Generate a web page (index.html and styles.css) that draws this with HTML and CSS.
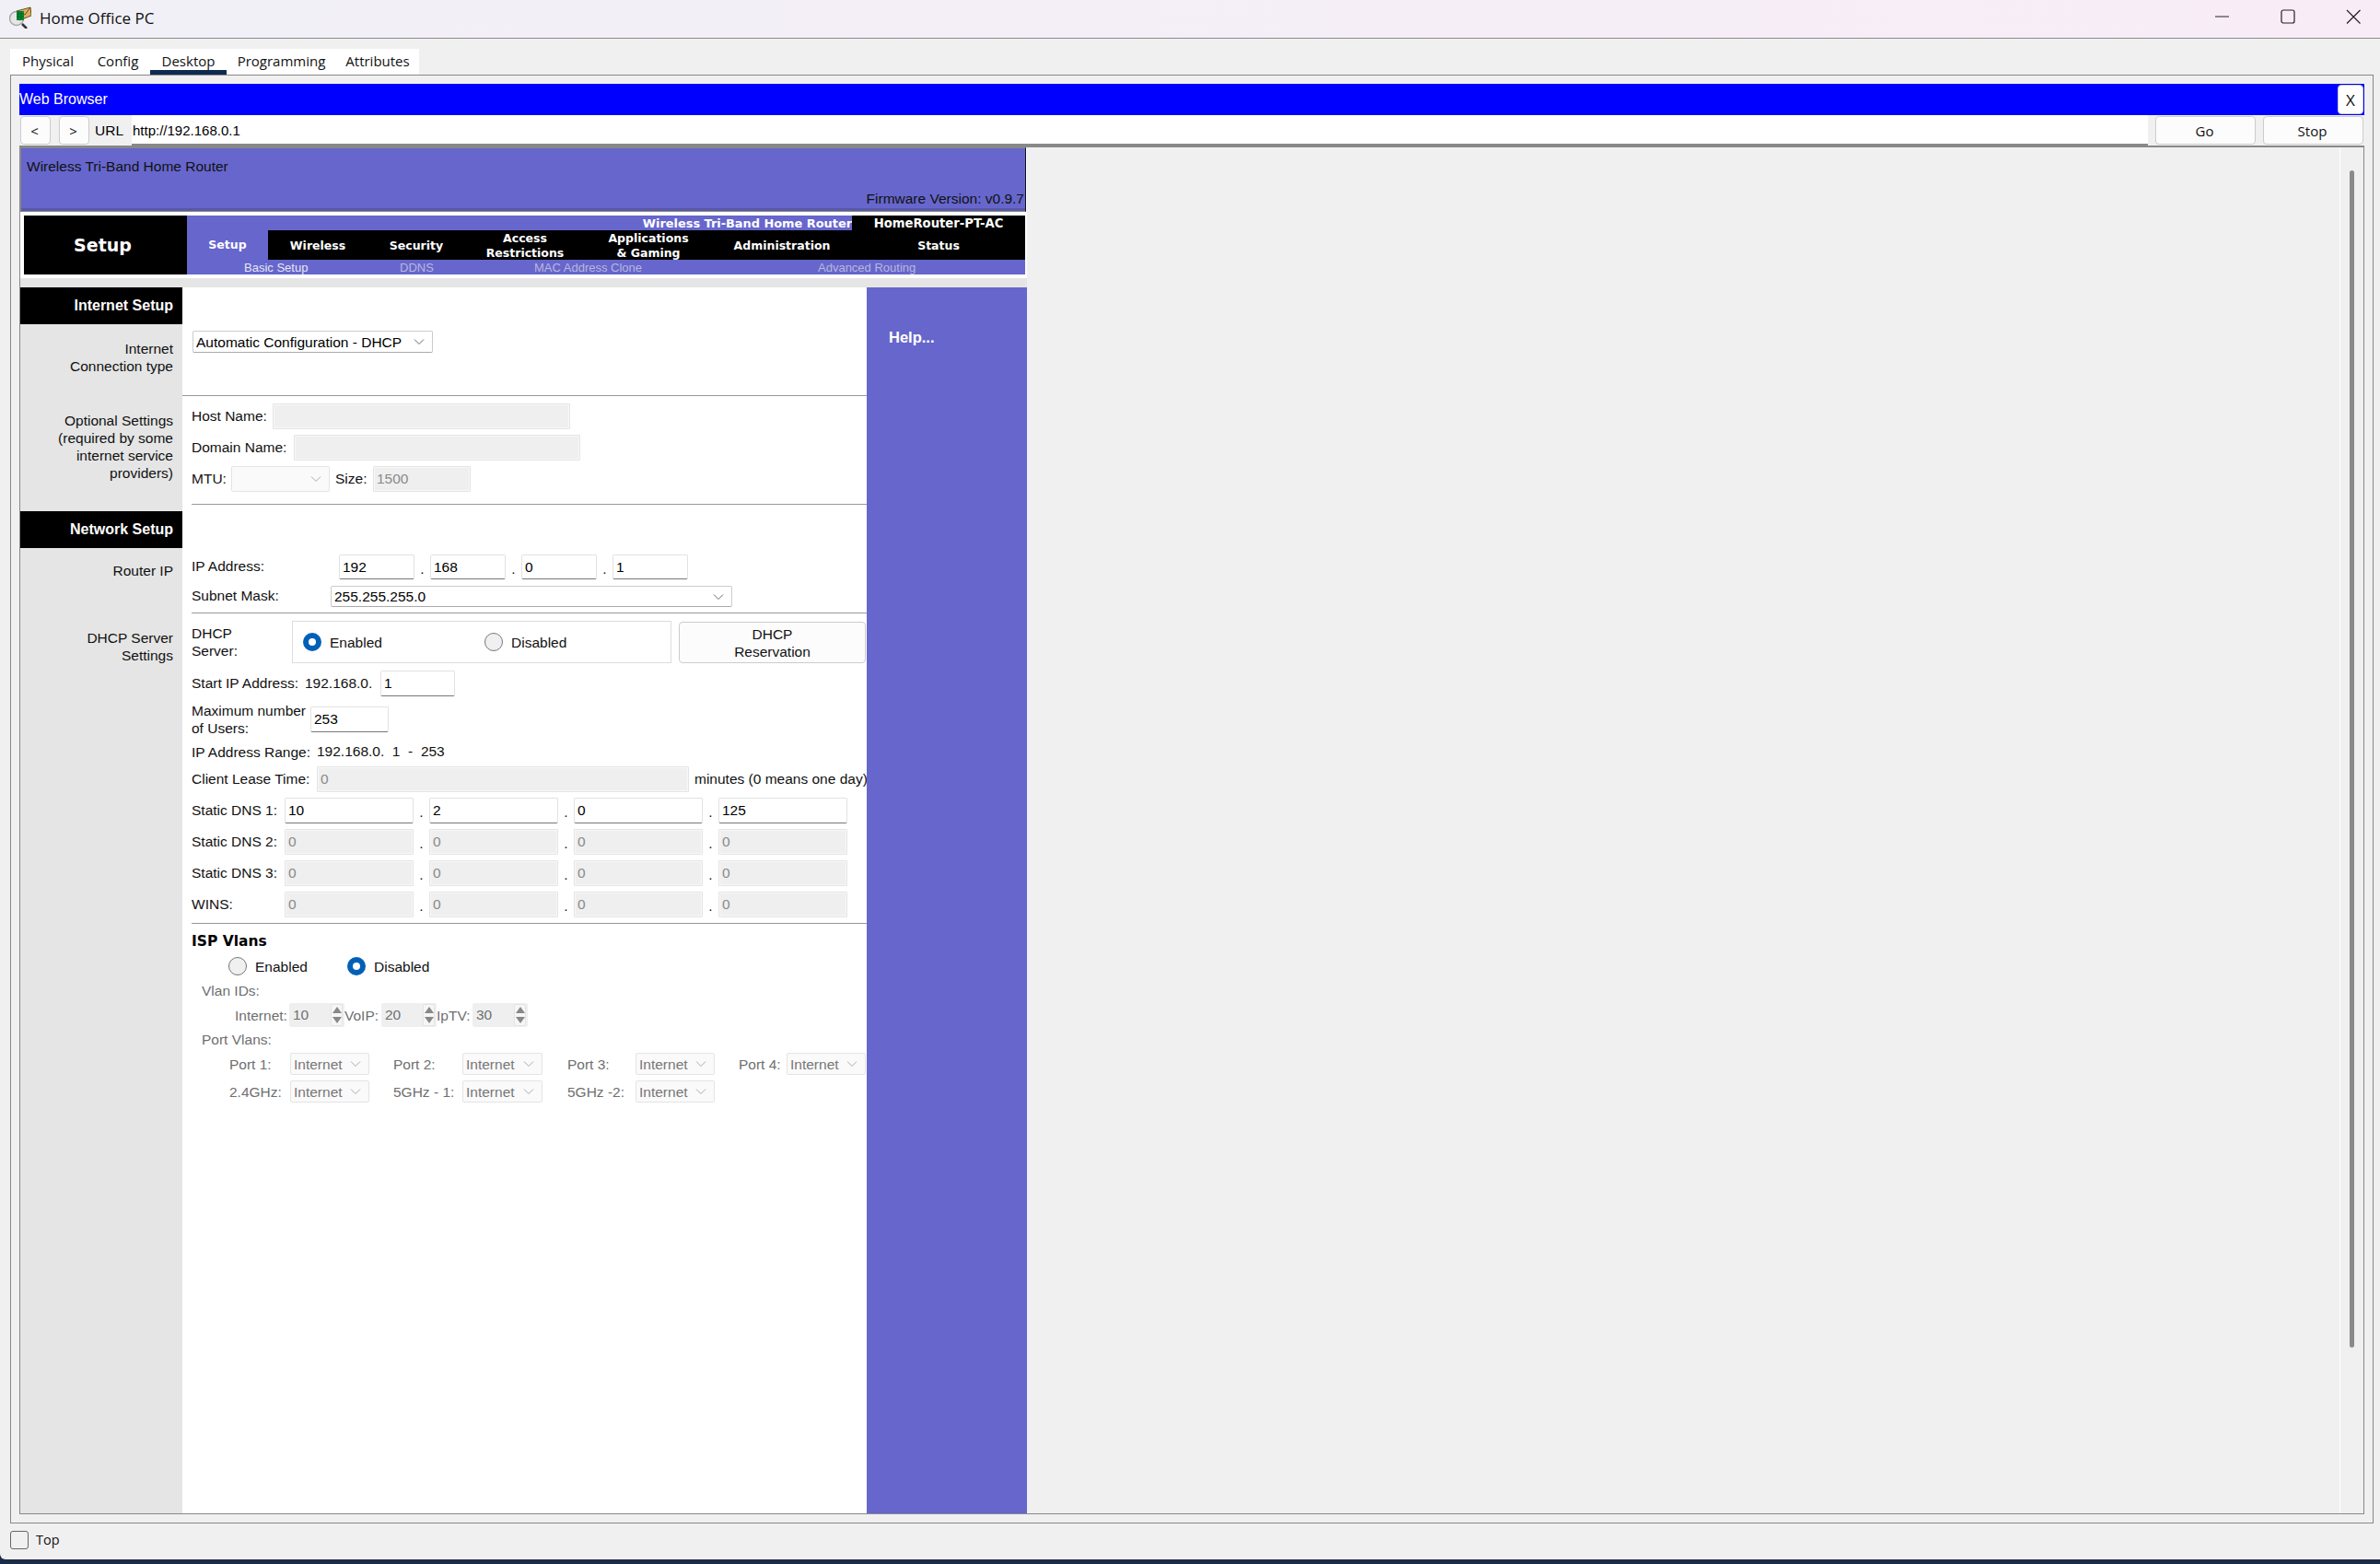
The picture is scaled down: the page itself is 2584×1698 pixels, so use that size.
FILE: index.html
```html
<!DOCTYPE html>
<html>

	<head>
		<meta charset="utf-8" />
		<title>Home Office PC</title>
		<link rel="stylesheet" href="styles.css">
	</head>

	<body>
		<div class="window">
			<header class="titlebar">
				<svg class="app-icon" width="24" height="24" viewBox="0 0 24 24">
					<circle cx="8" cy="13" r="7.5" fill="#e6e6e6" stroke="#a8a8a8" stroke-width="1.5"/>
					<path d="M8 5 L23 1 L24 10 L11 15 Z" fill="#d8b060" stroke="#6a5020" stroke-width="1"/>
					<path d="M8 5 L17 9 L23 1" fill="none" stroke="#6a5020" stroke-width="1"/>
					<rect x="8" y="5" width="8" height="10" fill="#0c8a2c"/>
					<path d="M10 5V15M13 5V15M8 8H16M8 11H16" stroke="#063" stroke-width="1"/>
					<path d="M14 19 L19 24" stroke="#333" stroke-width="2.5"/>
				</svg>
				<span class="title">Home Office PC</span>
				<div class="controls">
					<svg width="16" height="16" viewBox="0 0 16 16"><path d="M0 8H15" stroke="#222" stroke-width="1"/></svg>
					<svg width="16" height="16" viewBox="0 0 16 16"><rect x="1" y="1" width="14" height="14" rx="2" fill="none" stroke="#222" stroke-width="1.2"/></svg>
					<svg width="16" height="16" viewBox="0 0 16 16"><path d="M1 1L15.5 15.5M15.5 1L1 15.5" stroke="#222" stroke-width="1.2"/></svg>
				</div>
			</header>

			<ul class="tabs">
				<li class="tab tab-physical">Physical</li>
				<li class="tab tab-config">Config</li>
				<li class="tab tab-desktop">Desktop</li>
				<li class="tab tab-programming">Programming</li>
				<li class="tab tab-attributes">Attributes</li>
			</ul>

			<div class="frame">
				<div class="bluebar">
					<span>Web Browser</span>
					<button class="btn btn-x">X</button>
				</div>
				<div class="urlrow">
					<button class="btn btn-nav">&lt;</button>
					<button class="btn btn-nav">&gt;</button>
					<span class="url-label">URL</span>
					<input class="url-input" type="text" value="http://192.168.0.1">
					<button class="btn btn-go">Go</button>
					<button class="btn btn-go">Stop</button>
				</div>

				<div class="inner">
					<div class="view">
						<div class="site">
							<div class="site-head">
								<div>Wireless Tri-Band Home Router</div>
								<div class="firmware">Firmware Version: v0.9.7</div>
							</div>

							<div class="menu">
								<div class="brand">Setup</div>
								<div class="menu-body">
									<div class="menu-top">
										<div class="product">Wireless Tri-Band Home Router</div>
										<div class="model">HomeRouter-PT-AC</div>
									</div>
									<div class="menu-nav">
										<div class="nav nav-setup">Setup</div>
										<div class="nav nav-wireless">Wireless</div>
										<div class="nav nav-security">Security</div>
										<div class="nav nav-access">Access<br>Restrictions</div>
										<div class="nav nav-apps">Applications<br>&amp; Gaming</div>
										<div class="nav nav-admin">Administration</div>
										<div class="nav nav-status">Status</div>
									</div>
									<div class="menu-sub">
										<span class="sub sub-basic">Basic Setup</span>
										<span class="sub sub-ddns">DDNS</span>
										<span class="sub sub-mac">MAC Address Clone</span>
										<span class="sub">Advanced Routing</span>
									</div>
								</div>
							</div>
							<div class="strip"></div>

							<div class="main">
								<div class="side">
									<div class="side-head">Internet Setup</div>
									<div class="side-text side-conn">Internet<br>Connection type</div>
									<div class="side-text side-opt">Optional Settings<br>(required by some<br>internet service<br>providers)</div>
									<div class="side-head side-net">Network Setup</div>
									<div class="side-text side-router">Router IP</div>
									<div class="side-text side-dhcp">DHCP Server<br>Settings</div>
								</div>

								<div class="form">
									<div class="conn-block">
										<select class="sel sel-conn"><option>Automatic Configuration - DHCP</option></select>
									</div>

									<div class="row row-host">
										<label class="w88 up">Host Name:</label>
										<input class="off w323" disabled>
									</div>
									<div class="row row-domain">
										<label class="w111 up">Domain Name:</label>
										<input class="off w311" disabled>
									</div>
									<div class="row row-mtu">
										<label class="w43 up">MTU:</label>
										<select class="sel sel-off w107" disabled></select>
										<label class="size-label up">Size:</label>
										<input class="off w106" value="1500" disabled>
									</div>
									<hr class="rule rule-1">

									<div class="row row-ip">
										<label class="w160 up">IP Address:</label>
										<input class="on w82" value="192"><span class="dot">.</span>
										<input class="on w82" value="168"><span class="dot">.</span>
										<input class="on w82" value="0"><span class="dot">.</span>
										<input class="on w82" value="1">
									</div>
									<div class="row row-mask">
										<label class="w151 up">Subnet Mask:</label>
										<select class="sel w436"><option>255.255.255.0</option></select>
									</div>
									<hr class="rule rule-2">

									<div class="row row-server">
										<label class="w109">DHCP<br>Server:</label>
										<div class="radio-box">
											<label class="choice"><input type="radio" name="dhcp" checked>Enabled</label>
											<label class="choice"><input type="radio" name="dhcp">Disabled</label>
										</div>
										<button class="btn btn-res">DHCP<br>Reservation</button>
									</div>
									<div class="row row-start">
										<label class="w123 up">Start IP Address:</label>
										<span class="w82">192.168.0.</span>
										<input class="on w81" value="1">
									</div>
									<div class="row row-max">
										<label class="w129">Maximum number<br>of Users:</label>
										<input class="on w85" value="253">
									</div>
									<div class="row row-range">
										<label class="w136">IP Address Range:</label>
										<span>192.168.0.&nbsp; 1&nbsp; -&nbsp; 253</span>
									</div>
									<div class="row row-lease">
										<label class="w136 up">Client Lease Time:</label>
										<input class="off w404" value="0" disabled>
										<span class="lease-note">minutes (0 means one day)</span>
									</div>

									<div class="row row-dns">
										<label class="w101 up">Static DNS 1:</label>
										<input class="on w140" value="10"><span class="dot">.</span>
										<input class="on w140" value="2"><span class="dot">.</span>
										<input class="on w140" value="0"><span class="dot">.</span>
										<input class="on w140" value="125">
									</div>
									<div class="row row-dns2">
										<label class="w101 up">Static DNS 2:</label>
										<input class="off w140" value="0" disabled><span class="dot">.</span>
										<input class="off w140" value="0" disabled><span class="dot">.</span>
										<input class="off w140" value="0" disabled><span class="dot">.</span>
										<input class="off w140" value="0" disabled>
									</div>
									<div class="row row-dns2">
										<label class="w101 up">Static DNS 3:</label>
										<input class="off w140" value="0" disabled><span class="dot">.</span>
										<input class="off w140" value="0" disabled><span class="dot">.</span>
										<input class="off w140" value="0" disabled><span class="dot">.</span>
										<input class="off w140" value="0" disabled>
									</div>
									<div class="row row-dns2">
										<label class="w101 up">WINS:</label>
										<input class="off w140" value="0" disabled><span class="dot">.</span>
										<input class="off w140" value="0" disabled><span class="dot">.</span>
										<input class="off w140" value="0" disabled><span class="dot">.</span>
										<input class="off w140" value="0" disabled>
									</div>
									<hr class="rule rule-3">

									<div class="isp-title">ISP Vlans</div>
									<div class="row row-isp">
										<label class="choice choice-isp"><input type="radio" name="isp">Enabled</label>
										<label class="choice"><input type="radio" name="isp" checked>Disabled</label>
									</div>
									<div class="row row-vlan muted">Vlan IDs:</div>
									<div class="row row-spin muted">
										<label class="w59">Internet:</label>
										<div class="spin"><span>10</span><i class="arrows"><b class="up-arrow"></b><b class="down-arrow"></b></i></div>
										<label class="w40">VoIP:</label>
										<div class="spin"><span>20</span><i class="arrows"><b class="up-arrow"></b><b class="down-arrow"></b></i></div>
										<label class="w39">IpTV:</label>
										<div class="spin"><span>30</span><i class="arrows"><b class="up-arrow"></b><b class="down-arrow"></b></i></div>
									</div>
									<div class="row row-portv muted">Port Vlans:</div>
									<div class="row row-port muted">
										<label class="w66">Port 1:</label>
										<select class="sel sel-off w86" disabled><option>Internet</option></select>
										<label class="w75 gap26">Port 2:</label>
										<select class="sel sel-off w87" disabled><option>Internet</option></select>
										<label class="w74 gap27">Port 3:</label>
										<select class="sel sel-off w86" disabled><option>Internet</option></select>
										<label class="w52 gap26">Port 4:</label>
										<select class="sel sel-off w86" disabled><option>Internet</option></select>
									</div>
									<div class="row row-port row-port2 muted">
										<label class="w66">2.4GHz:</label>
										<select class="sel sel-off w86" disabled><option>Internet</option></select>
										<label class="w75 gap26">5GHz - 1:</label>
										<select class="sel sel-off w87" disabled><option>Internet</option></select>
										<label class="w74 gap27">5GHz -2:</label>
										<select class="sel sel-off w86" disabled><option>Internet</option></select>
									</div>
								</div>

								<div class="help">Help...</div>
							</div>
						</div>
					</div>
					<div class="track"><div class="thumb"></div></div>
				</div>
			</div>

			<div class="foot">
				<span class="check"></span>
				<span>Top</span>
			</div>
		</div>
	</body>

</html>
```

FILE: styles.css
```css
* {
	box-sizing: border-box;
}

html, body {
	margin: 0;
	padding: 0;
}

body {
	width: 2584px;
	height: 1698px;
	overflow: hidden;
	background: #1b2b48;
	font-family: "Liberation Sans", Arial, sans-serif;
	font-size: 15.5px;
	color: #000;
}

.window {
	height: 1693px;
	background: #f0f0f0;
	border-bottom-left-radius: 6px;
	overflow: hidden;
}

/* title bar */
.titlebar {
	height: 42px;
	display: flex;
	align-items: center;
	padding-left: 10px;
	background: linear-gradient(90deg, #f1f0f7, #f8edf7);
	border-bottom: 1px solid #8a8a8a;
	font-family: "Open Sans", sans-serif;
}

.app-icon {
	flex: none;
	margin-top: -4px;
}

.title {
	margin: -3px 0 0 9px;
	font-size: 17px;
	color: #111;
}

.controls {
	margin-left: auto;
	margin-right: 21px;
	margin-top: -5px;
	display: flex;
	gap: 55px;
}

/* tabs */
.tabs {
	list-style: none;
	margin: 11px 0 0 11px;
	padding: 0;
	width: 444px;
	height: 28px;
	display: flex;
	background: #fff;
	font-family: "Open Sans", sans-serif;
	font-size: 15px;
}

.tab {
	text-align: center;
	line-height: 27px;
	color: #111;
}

.tab-physical { width: 82px; }
.tab-config { width: 70px; }
.tab-programming { width: 119px; }
.tab-attributes { width: 90px; }

.tab-desktop {
	width: 83px;
	border-bottom: 5px solid #0f2a50;
}

/* outer frame */
.frame {
	width: 2566px;
	height: 1573px;
	margin-left: 11px;
	padding: 9px;
	border: 1px solid #888;
}

.bluebar {
	height: 34px;
	display: flex;
	align-items: center;
	justify-content: space-between;
	background: #00f;
	color: #fff;
	font-size: 16px;
}

.btn {
	font-family: "Open Sans", sans-serif;
	font-size: 15px;
	color: #111;
	background: #fcfcfc;
	border: 1px solid #ccc;
	border-radius: 4px;
	padding: 0 2px 0 0;
}

.btn-x {
	width: 28px;
	height: 32px;
	margin-right: 1px;
	padding: 0;
	background: #fff;
	font-size: 17px;
}

.urlrow {
	height: 33px;
	display: flex;
	align-items: center;
}

.btn-nav {
	width: 33px;
	height: 31px;
	margin-left: 1px;
	margin-right: 8px;
}

.url-label {
	width: 40px;
	margin-left: -2px;
	font-size: 15.5px;
}

.url-input {
	width: 2189px;
	height: 33px;
	padding: 1px 0 0 1px;
	border: 0;
	border-bottom: 2px solid #888;
	outline: 0;
	font: 15px "Liberation Sans", Arial, sans-serif;
	background: #fff;
}

.btn-go {
	width: 109px;
	height: 31px;
	margin-left: 8px;
}

/* embedded page */
.inner {
	width: 2546px;
	height: 1486px;
	display: flex;
	border: 1px solid #888;
	border-top-width: 2px;
}

.view {
	width: 2518px;
	overflow: hidden;
}

.track {
	width: 26px;
	border-left: 1px solid #fff;
}

.thumb {
	width: 5px;
	height: 1278px;
	margin: 25px 0 0 10px;
	border-radius: 3px;
	background: #8a8a8a;
}

.site {
	width: 1093px;
	height: 100%;
	background: #fff;
	display: flex;
	flex-direction: column;
}

.site-head {
	width: 1092px;
	height: 70px;
	padding: 11px 0 1px 6px;
	display: flex;
	flex-direction: column;
	justify-content: space-between;
	background: #66c;
	border: 1px solid #888;
	border-right-color: #111;
	box-shadow: inset 0 -3px #5858a8;
	color: #111;
}

.firmware {
	text-align: right;
	margin: 0 1px 3px 0;
}

/* router menu */
.menu {
	display: flex;
	height: 64px;
	margin: 4px 2px 0 4px;
	font-family: "DejaVu Sans", sans-serif;
	font-weight: bold;
	font-size: 12.5px;
	color: #fff;
}

.brand {
	width: 177px;
	display: flex;
	align-items: center;
	justify-content: center;
	padding-right: 6px;
	background: #000;
	font-size: 19px;
}

.menu-body {
	flex: 1;
	background: #66c;
}

.menu-top {
	height: 16px;
	display: flex;
	line-height: 17px;
	font-size: 13.2px;
}

.product {
	flex: 1;
	text-align: right;
	font-size: 12.9px;
}

.model {
	width: 188px;
	background: #000;
	text-align: center;
}

.menu-nav {
	height: 32px;
	display: flex;
	padding-top: 1px;
	background: #000;
	line-height: 16px;
}

.nav {
	display: flex;
	align-items: center;
	justify-content: center;
	text-align: center;
}

.nav-setup {
	width: 88px;
	margin-top: -1px;
	background: #66c;
}

.nav-wireless { width: 108px; }
.nav-security { width: 106px; }
.nav-access { width: 130px; }
.nav-apps { width: 138px; }
.nav-admin { width: 152px; }
.nav-status { width: 188px; }

.menu-sub {
	height: 16px;
	display: flex;
	padding-left: 62px;
	line-height: 17px;
	font-family: "Liberation Sans", Arial, sans-serif;
	font-weight: normal;
	font-size: 13px;
	color: #b8b8dc;
}

.sub-basic {
	width: 169px;
	color: #e6e6f2;
}

.sub-ddns { width: 146px; }
.sub-mac { width: 308px; }

.strip {
	height: 10px;
	margin-top: 4px;
	background: #e5e5e5;
}

.main {
	flex: 1;
	display: flex;
}

/* left column */
.side {
	width: 176px;
	background: #e5e5e5;
	text-align: right;
}

.side-head {
	height: 40px;
	padding-right: 10px;
	background: #000;
	color: #fff;
	font-weight: bold;
	font-size: 16px;
	line-height: 39px;
}

.side-text {
	padding-right: 10px;
	line-height: 19px;
	color: #111;
}

.side-conn { margin-top: 17px; }
.side-opt { margin-top: 40px; }
.side-net { margin-top: 32px; }
.side-router { margin-top: 15px; }
.side-dhcp { margin-top: 54px; }

/* form column */
.form {
	width: 743px;
	color: #111;
}

.conn-block {
	height: 118px;
	padding: 47px 0 0 11px;
	border-bottom: 1px solid #999;
}

.row {
	display: flex;
	align-items: center;
	margin-left: 10px;
	white-space: nowrap;
}

label {
	display: block;
	flex: none;
	line-height: 19px;
}

.rule {
	height: 1px;
	margin: 0 0 0 10px;
	border: 0;
	background: #999;
}

.rule-1 { margin-top: 13px; }
.rule-2 { margin-top: 6px; }
.rule-3 { margin-top: 6px; }

.row-host { margin-top: 8px; height: 28px; }
.row-domain { margin-top: 6px; height: 28px; }
.row-mtu { margin-top: 6px; height: 28px; }
.row-ip { margin-top: 54px; height: 27px; }
.row-mask { margin-top: 7px; height: 23px; }
.row-server { margin-top: 8px; height: 46px; }
.row-start { margin-top: 8px; height: 28px; }
.row-max { margin-top: 11px; height: 28px; }
.row-range { margin-top: 7px; height: 28px; }
.row-lease { margin-top: 2px; height: 28px; }
.row-dns { margin-top: 6px; height: 28px; }
.row-dns2 { margin-top: 6px; height: 28px; }
.row-isp { margin-top: 7px; height: 20px; padding-left: 40px; }
.row-vlan { margin-top: 7px; height: 20px; padding-left: 11px; }
.row-spin { margin-top: 3px; height: 26px; padding-left: 47px; }
.row-portv { margin-top: 4px; height: 20px; padding-left: 11px; }
.row-port { margin-top: 4px; height: 24px; padding-left: 41px; }
.row-port2 { margin-top: 6px; }

.up {
	margin-top: -2px;
}

.dot {
	flex: none;
	width: 17px;
	text-align: center;
	padding-top: 4px;
}

.size-label {
	width: 41px;
	margin-left: 6px;
}

.lease-note {
	margin-left: 6px;
}

.muted {
	color: #6f6f6f;
}

.isp-title {
	margin: 9px 0 0 10px;
	height: 20px;
	line-height: 20px;
	font-family: "DejaVu Sans", sans-serif;
	font-weight: bold;
	font-size: 15.5px;
	color: #000;
}

/* controls */
input, select {
	font: 15.5px "Liberation Sans", Arial, sans-serif;
	flex: none;
	outline: 0;
}

.on {
	height: 100%;
	padding: 0 0 0 3px;
	background: #fff;
	color: #000;
	border: 1px solid #e2e2e2;
	border-bottom-color: #777;
	border-radius: 2px;
}

.off {
	height: 100%;
	padding: 0 0 0 3px;
	background: #efefef;
	color: #8a8a8a;
	border: 1px solid #e4e4e4;
	box-shadow: inset 0 0 0 1px #f8f8f8;
	border-radius: 1px;
}

.sel {
	height: 100%;
	padding: 0 0 0 3px;
	appearance: none;
	background: #fff url("data:image/svg+xml,%3Csvg xmlns='http://www.w3.org/2000/svg' width='12' height='8'%3E%3Cpath d='M1 1.5l5 5 5-5' fill='none' stroke='%23666'/%3E%3C/svg%3E") no-repeat right 8px center;
	color: #000;
	border: 1px solid #ccc;
	border-bottom-color: #aaa;
	border-radius: 2px;
}

.sel-conn {
	width: 261px;
	height: 24px;
}

.sel-off {
	background-color: #fafafa;
	background-image: url("data:image/svg+xml,%3Csvg xmlns='http://www.w3.org/2000/svg' width='12' height='8'%3E%3Cpath d='M1 1.5l5 5 5-5' fill='none' stroke='%23aaa'/%3E%3C/svg%3E");
	color: #777;
	border-color: #e4e4e4;
	opacity: 1;
}

input[type="radio"] {
	appearance: none;
	flex: none;
	width: 20px;
	height: 20px;
	margin: 0 9px 0 0;
	border: 1px solid #777;
	border-radius: 50%;
	background: #f0f0f0;
}

input[type="radio"]:checked {
	border: 6px solid #0060b8;
	background: #fff;
}

.radio-box {
	flex: none;
	width: 412px;
	height: 100%;
	display: flex;
	align-items: center;
	padding-left: 11px;
	border: 1px solid #ddd;
}

.choice {
	display: flex;
	align-items: center;
	width: 197px;
}

.choice-isp {
	width: 129px;
}

.btn-res {
	flex: none;
	width: 203px;
	height: 45px;
	margin-left: 8px;
	padding: 2px 0 0 0;
	font: 15.5px/19px "Liberation Sans", Arial, sans-serif;
}

.spin {
	flex: none;
	width: 60px;
	height: 100%;
	display: flex;
	align-items: center;
	justify-content: space-between;
	padding: 0 2px 0 4px;
	background: #efefef;
	border-radius: 2px;
}

.arrows {
	width: 13px;
	height: 24px;
	display: flex;
	flex-direction: column;
	align-items: center;
	justify-content: space-around;
	background: #f6f6f6;
	border: 1px solid #e4e4e4;
	border-radius: 2px;
}

.up-arrow, .down-arrow {
	width: 0;
	height: 0;
	border-left: 5px solid transparent;
	border-right: 5px solid transparent;
}

.up-arrow { border-bottom: 7px solid #888; }
.down-arrow { border-top: 7px solid #888; }

.help {
	width: 174px;
	padding: 44px 0 0 24px;
	background: #66c;
	color: #fff;
	font-weight: bold;
	font-size: 16.5px;
	line-height: 20px;
}

/* bottom bar */
.foot {
	height: 39px;
	display: flex;
	align-items: center;
	padding: 0 0 4px 11px;
	font-family: "Open Sans", sans-serif;
	font-size: 14.5px;
	color: #111;
}

.check {
	width: 20px;
	height: 20px;
	margin-right: 8px;
	border: 1px solid #666;
	border-radius: 3px;
}

/* widths */
.w39 { width: 39px; }
.w40 { width: 40px; }
.w43 { width: 43px; }
.w52 { width: 52px; }
.w59 { width: 59px; }
.w66 { width: 66px; }
.w74 { width: 74px; }
.w75 { width: 75px; }
.w81 { width: 81px; }
.w82 { width: 82px; flex: none; }
.w85 { width: 85px; }
.w86 { width: 86px; }
.w87 { width: 87px; }
.w88 { width: 88px; }
.w101 { width: 101px; }
.w106 { width: 106px; }
.w107 { width: 107px; }
.w109 { width: 109px; }
.w111 { width: 111px; }
.w123 { width: 123px; }
.w129 { width: 129px; }
.w136 { width: 136px; }
.w140 { width: 140px; }
.w151 { width: 151px; }
.w160 { width: 160px; }
.w311 { width: 311px; }
.w323 { width: 323px; }
.w404 { width: 404px; }
.w436 { width: 436px; }

.gap26 { margin-left: 26px; }
.gap27 { margin-left: 27px; }
```
